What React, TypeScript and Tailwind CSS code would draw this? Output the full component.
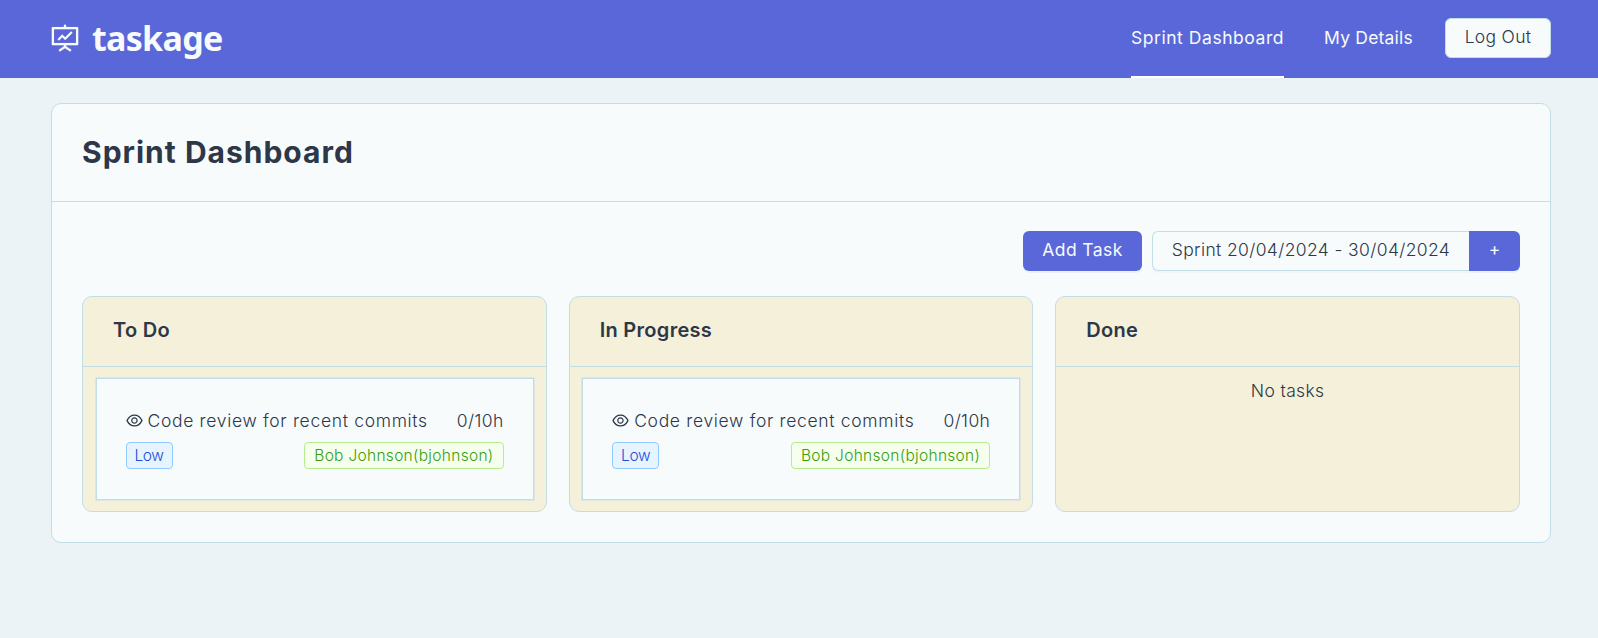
import React from "react";
import { AiOutlineEye, AiOutlineFundProjectionScreen } from "react-icons/ai";

function Header() {
  return (
    <header className="flex h-[78px] items-start justify-between bg-[#5a67d8] pr-[47px] pl-[49px] text-[#f7fbfc]">
      <div className="flex h-[78px] items-center">
        <AiOutlineFundProjectionScreen className="mb-0.5 size-8 stroke-[#f7fbfc] stroke-[3]" />
        <span className="ml-[11px] pb-0.5 font-['Noto_Sans',sans-serif] text-[34px] leading-none font-bold tracking-[-0.7px]">
          taskage
        </span>
      </div>
      <nav className="flex h-[78px] items-start text-[17.5px]">
        <a className="flex h-[78px] w-[153px] items-center justify-center border-b-2 border-white pt-px tracking-[0.55px] whitespace-nowrap">
          Sprint Dashboard
        </a>
        <a className="ml-10 flex h-[76px] w-[89px] items-center justify-center pt-px tracking-[0.2px] whitespace-nowrap">
          My Details
        </a>
        <button className="mt-[18px] ml-8 flex h-10 w-[106px] items-center justify-center rounded-md border border-[#c3dde6] bg-[#f7fbfc] pb-0.5 font-[350] tracking-[0.3px] text-[#2d3748]">
          Log Out
        </button>
      </nav>
    </header>
  );
}

function Toolbar() {
  return (
    <div className="flex h-10 justify-end text-[17.5px]">
      <button className="flex w-[119px] items-center justify-center rounded-md bg-[#5a67d8] pb-0.5 tracking-[0.4px] text-[#f7fbfc] shadow-[0_2px_0_rgba(90,103,216,0.06)]">
        Add Task
      </button>
      <button className="ml-2.5 flex w-[317px] items-center justify-center rounded-l-md border border-r-0 border-[#c3dde6] bg-[#f7fbfc] pb-0.5 font-[350] tracking-[0.37px] whitespace-nowrap shadow-[0_2px_0_rgba(0,0,0,0.02)]">
        Sprint 20/04/2024 - 30/04/2024
      </button>
      <button className="flex w-[51px] items-center justify-center rounded-r-md bg-[#5a67d8] pb-1 text-[#f7fbfc] shadow-[0_2px_0_rgba(90,103,216,0.06)]">
        +
      </button>
    </div>
  );
}

function TaskCard() {
  return (
    <div className="mt-[11px] mr-3 ml-[12.5px] h-[122px] border border-[#c3dde6] bg-[#f7fbfc] px-[29px] pt-[29px] shadow-[0_0_0_0.5px_#c3dde6]">
      <div className="flex h-[26px] items-center justify-between text-[17.5px] font-[350]">
        <span className="flex items-center tracking-[0.68px] whitespace-nowrap">
          <AiOutlineEye className="mr-1 mb-px -ml-px size-[19px]" />
          Code review for recent commits
        </span>
        <span className="tracking-[0.4px]">0/10h</span>
      </div>
      <div className="mt-2 flex h-[27px] justify-between text-[15.5px] font-[350]">
        <span className="flex w-[47px] items-center justify-center rounded-[4px] border border-[#91caff] bg-[#e6f4ff] tracking-[-0.4px] text-[#1d4ed8]">
          Low
        </span>
        <span className="flex w-[199.5px] items-center justify-center rounded-[4px] border border-[#b7eb8f] bg-[#f6ffed] tracking-[0.3px] text-[#389e0d]">
          Bob Johnson(bjohnson)
        </span>
      </div>
    </div>
  );
}

function Column({ title, children }: { title: string; children: React.ReactNode }) {
  return (
    <section className="h-[216px] rounded-[10px] border border-[#c3dde6] bg-[#f5f0d9]">
      <h2 className="flex h-[70px] items-center border-b border-[#c3dde6] px-[30px] pb-[3px] text-[20px] font-semibold tracking-[0.3px]">
        {title}
      </h2>
      {children}
    </section>
  );
}

export default function App() {
  return (
    <div className="min-h-screen bg-[#ebf3f6] font-[Inter,sans-serif] text-[#2d3748]">
      <Header />
      <main className="mt-[25px] mr-[47px] ml-[51px] h-[440px] rounded-[10px] border border-[#c3dde6] bg-[#f7fbfc]">
        <h1 className="flex h-[98px] items-center border-b border-[#c3dde6] px-[30px] text-[30px] font-bold tracking-[1px]">
          Sprint Dashboard
        </h1>
        <div className="px-[30px] pt-[29px]">
          <Toolbar />
          <div className="mt-[25px] grid grid-cols-3 gap-[22px]">
            <Column title="To Do">
              <TaskCard />
            </Column>
            <Column title="In Progress">
              <TaskCard />
            </Column>
            <Column title="Done">
              <p className="mt-[11px] text-center text-[17.5px] leading-[26px] font-[350] tracking-[0.35px]">No tasks</p>
            </Column>
          </div>
        </div>
      </main>
    </div>
  );
}
